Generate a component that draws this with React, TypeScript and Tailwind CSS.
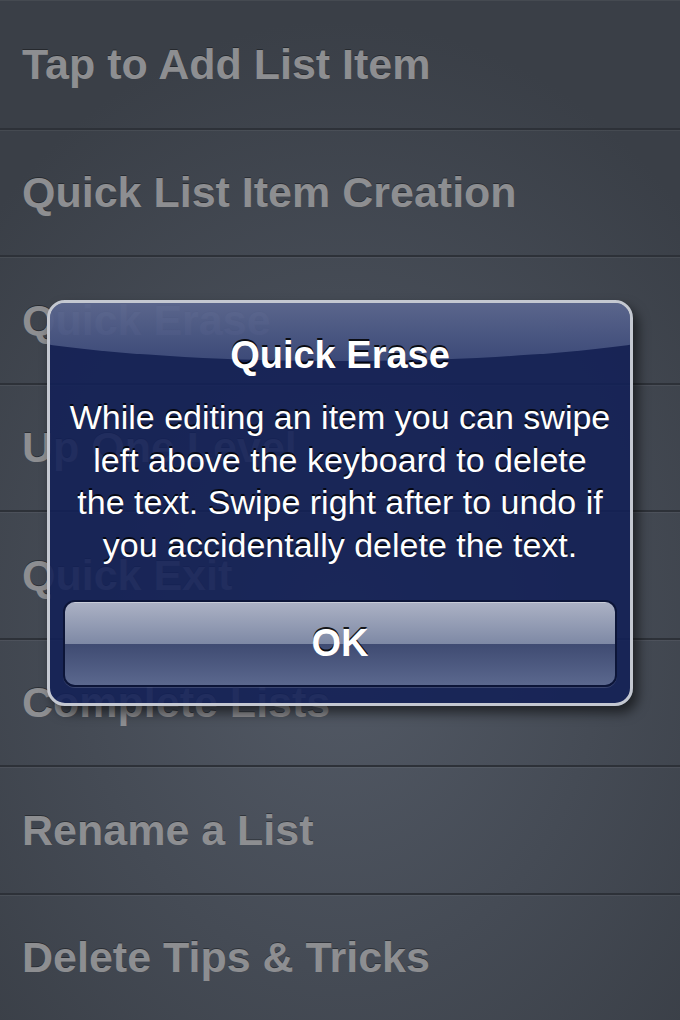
import React from "react"

const items = [
	"Tap to Add List Item",
	"Quick List Item Creation",
	"Quick Erase",
	"Up One Level",
	"Quick Exit",
	"Complete Lists",
	"Rename a List",
	"Delete Tips & Tricks",
]

export default function App() {
	return (
		<div className="relative w-[680px] h-[1020px] overflow-hidden bg-[radial-gradient(ellipse_70%_60%_at_50%_62%,#535a66_0%,#454b55_55%,#3a3f47_100%)] font-['Liberation_Sans',Arial,sans-serif]">
			{/* list rows */}
			<div className="flex flex-col">
				{items.map((item, i) => (
					<div
						key={item}
						className={`h-[127.5px] flex items-center px-[22px] ${
							i > 0 ? "border-t-2 border-[#2d3138]" : ""
						} shadow-[inset_0_1px_0_rgba(255,255,255,0.06)]`}
					>
						<span className="text-[43px] font-bold text-[#8d8e91] [text-shadow:0_-1px_0_rgba(0,0,0,0.35)]">
							{item}
						</span>
					</div>
				))}
			</div>

			{/* alert */}
			<div className="absolute left-[47px] top-[300px] w-[586px] h-[406px] rounded-[18px] border-[3px] border-[#c4c8d1] bg-[rgba(18,32,86,0.88)] shadow-[5px_7px_12px_rgba(0,0,0,0.55)] overflow-hidden">
				<div className="absolute left-[-20%] w-[140%] top-[-50px] h-[108px] rounded-[50%] bg-gradient-to-b from-[rgba(175,181,200,0.62)] to-[rgba(90,104,148,0.55)]"></div>
				<div className="relative flex flex-col items-center px-[13px] pt-[30px] text-white">
					<div className="text-[38px] leading-[44px] font-bold [text-shadow:0_-2px_0_rgba(0,0,0,0.85)]">
						Quick Erase
					</div>
					<p className="mt-[19px] text-center text-[34px] leading-[42.5px] whitespace-nowrap [text-shadow:0_-2px_0_rgba(0,0,0,0.8)]">
						While editing an item you can swipe
						<br />
						left above the keyboard to delete
						<br />
						the text. Swipe right after to undo if
						<br />
						you accidentally delete the text.
					</p>
					<button className="mt-[34px] w-full h-[87px] rounded-[12px] border-2 border-[#0c1538] overflow-hidden flex flex-col relative shadow-[0_1px_0_rgba(255,255,255,0.15)]">
						<div className="h-1/2 w-full bg-gradient-to-b from-[#abb1c4] to-[#7e89a5] border-t border-[#c9cdd8]"></div>
						<div className="h-1/2 w-full bg-gradient-to-b from-[#3f4b72] to-[#5b688e]"></div>
						<span className="absolute inset-0 flex items-center justify-center text-[38px] font-bold text-white [text-shadow:0_-2px_0_rgba(0,0,0,0.85)]">
							OK
						</span>
					</button>
				</div>
			</div>
		</div>
	)
}
